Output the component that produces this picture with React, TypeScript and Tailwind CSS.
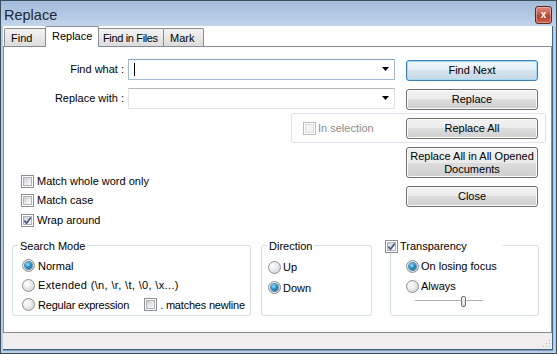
import React from "react";

const font = { fontFamily: "'Liberation Sans', Arial, sans-serif" };

function Check({ checked = false, disabled = false }: { checked?: boolean; disabled?: boolean }) {
  return (
    <span
      className={
        "relative inline-block w-[13px] h-[13px] shrink-0 border p-[1px] bg-white " +
        (disabled ? "border-[#bcbcbc]" : "border-[#8e8f8f]")
      }
    >
      <span
        className={
          "block w-full h-full border " +
          (disabled
            ? "border-[#dcdcdc] bg-[#f4f4f4]"
            : "border-[#b0b4ba] bg-[linear-gradient(135deg,#c8ccd2,#eceef0_60%,#f8f8f8)]")
        }
      />
      {checked && (
        <svg className="absolute left-0 top-0" width="11" height="11" viewBox="0 0 11 11">
          <path d="M2.3 5.6 L4.5 8.2 L8.8 2.4" fill="none" stroke="#45598a" strokeWidth="1.7" />
        </svg>
      )}
    </span>
  );
}

function Radio({ checked = false }: { checked?: boolean }) {
  return (
    <span className="relative flex items-center justify-center w-[13px] h-[13px] shrink-0 rounded-full border border-[#8e9092] bg-[radial-gradient(circle_at_35%_35%,#ffffff,#e6e7e9_50%,#c9cbce)]">
      {checked && (
        <span className="block w-[7px] h-[7px] rounded-full bg-[radial-gradient(circle_at_40%_35%,#9be6fb,#2a8fc4_45%,#0b4f79)] shadow-[0_0_0_1px_#5b8db0]" />
      )}
    </span>
  );
}

function Btn({ children, h = "h-[21px]", focus = false }: { children: React.ReactNode; h?: string; focus?: boolean }) {
  return (
    <div
      className={
        "relative z-10 w-[132px] flex items-center justify-center text-center leading-[13px] rounded-[3px] border " +
        h +
        " " +
        (focus
          ? "border-[#3c7fb1] bg-[linear-gradient(to_bottom,#eef6fb,#e4eef5_50%,#d4e2ec_50%,#c6d8e6)] shadow-[inset_0_0_0_1px_#9fd9f5]"
          : "border-[#707070] bg-[linear-gradient(to_bottom,#f2f2f2,#ebebeb_50%,#dddddd_50%,#cfcfcf)] shadow-[inset_0_0_0_1px_#fbfbfb]")
      }
    >
      {children}
    </div>
  );
}

function Combo({ focus = false, caret = false }: { focus?: boolean; caret?: boolean }) {
  return (
    <div
      className={
        "relative w-[267px] h-[21px] border bg-white flex items-center " +
        (focus ? "border-[#a3bbd2] border-t-[#7d9fbf]" : "border-[#e0e3e8] border-t-[#b4b7bd]")
      }
    >
      {caret && <span className="ml-[5px] w-px h-[13px] bg-black" />}
      <svg className="absolute right-[5px] top-[7px]" width="7" height="4" viewBox="0 0 7 4">
        <path d="M0 0 H7 L3.5 4 Z" fill="#000" />
      </svg>
    </div>
  );
}

function Group({ label, w, children, labelNode }: { label?: string; w: string; children: React.ReactNode; labelNode?: React.ReactNode }) {
  return (
    <div className={"relative h-[71px] rounded-[3px] border border-[#d5dfe5] " + w}>
      {label && (
        <span className="absolute left-[5px] top-[-6px] px-[2px] bg-white leading-[13px] whitespace-nowrap">{label}</span>
      )}
      {labelNode}
      {children}
    </div>
  );
}

const row = "flex items-center whitespace-nowrap";

export default function App() {
  return (
    <div
      className="w-[557px] h-[354px] flex flex-col border border-[#3e4e5e] bg-[#b9cde4] text-[11px] text-black overflow-hidden"
      style={font}
    >
      {/* title bar */}
      <div className="h-[25px] shrink-0 flex items-center justify-between bg-[linear-gradient(to_bottom,#a2bcd9,#b4cae3_60%,#c2d5ea)] pl-[3px] pr-[4px]">
        <span className="text-[14.5px] text-[#1e2733] leading-[16px] mt-[2px]">Replace</span>
        <span className="w-[17px] h-[18px] mt-[2px] rounded-[3px] border border-[#5b2620] bg-[linear-gradient(to_bottom,#dd8a7c,#c65a48_45%,#b2402f_55%,#c9634f)] flex items-center justify-center text-white text-[10px] font-bold leading-none shadow-[inset_0_0_0_1px_rgba(255,255,255,0.35)]">
          x
        </span>
      </div>

      {/* client */}
      <div className="flex-1 flex flex-col ml-[2px] mr-[3px] mb-[3px] bg-white border-r border-b border-[#3f627f] shadow-[0_1px_0_#7f9dbc]">
        {/* tabs */}
        <div className="h-[20px] flex items-end pl-[1px] shrink-0 whitespace-nowrap">
          <div className="w-[42px] h-[18px] border border-b-0 border-[#898c95] rounded-t-[2px] bg-[linear-gradient(to_bottom,#f4f4f4,#e8e8e8_50%,#dcdcdc)] pl-[6px] leading-[18px]">Find</div>
          <div className="relative z-20 -ml-px -mb-px w-[54px] h-[21px] border border-b-0 border-[#898c95] rounded-t-[2px] bg-white pl-[6px] leading-[18px]">Replace</div>
          <div className="-ml-px w-[66px] h-[18px] border border-b-0 border-[#898c95] rounded-t-[2px] bg-[linear-gradient(to_bottom,#f4f4f4,#e8e8e8_50%,#dcdcdc)] pl-[4px] leading-[18px] tracking-[-0.35px] overflow-hidden">Find in Files</div>
          <div className="-ml-px w-[41px] h-[18px] border border-b-0 border-[#898c95] rounded-t-[2px] bg-[linear-gradient(to_bottom,#f4f4f4,#e8e8e8_50%,#dcdcdc)] pl-[6px] leading-[18px]">Mark</div>
        </div>

        {/* panel */}
        <div className="relative h-[287px] shrink-0 border border-[#898c95] bg-white">
          {/* In selection group (behind buttons) */}
          <div className="absolute left-[287px] top-[66px] w-[255px] h-[30px] rounded-[3px] border border-[#dde3e8] flex items-center pl-[11px] gap-[2px] text-[#8d8d8d] whitespace-nowrap">
            <Check disabled />
            <span>In selection</span>
          </div>

          <div className="flex">
            {/* left column */}
            <div className="w-[391px] flex flex-col">
              <div className={"mt-[12px] " + row}>
                <span className="w-[120px] text-right">Find what :</span>
                <span className="ml-[4px]"><Combo focus caret /></span>
              </div>
              <div className={"mt-[8px] " + row}>
                <span className="w-[120px] text-right">Replace with :</span>
                <span className="ml-[4px]"><Combo /></span>
              </div>
              <div className="mt-[62px] pl-[17px] flex flex-col">
                <div className={"h-[20px] gap-[3px] " + row}><Check /><span>Match whole word only</span></div>
                <div className={"h-[19px] gap-[3px] " + row}><Check /><span>Match case</span></div>
                <div className={"h-[20px] gap-[3px] " + row}><Check checked /><span>Wrap around</span></div>
              </div>
            </div>
            {/* right column */}
            <div className="ml-[11px] mt-[13px] flex flex-col gap-[8px]">
              <Btn focus>Find Next</Btn>
              <Btn>Replace</Btn>
              <Btn>Replace All</Btn>
              <Btn h="h-[31px]">
                Replace All in All Opened
                <br />
                Documents
              </Btn>
              <Btn>Close</Btn>
            </div>
          </div>

          {/* groups */}
          <div className="mt-[15px] pl-[8px] flex">
            <Group label="Search Mode" w="w-[239px]">
              <div className="pt-[10px] pl-[9px] flex flex-col">
                <div className={"h-[19.5px] gap-[3px] " + row}><Radio checked /><span>Normal</span></div>
                <div className={"h-[19.5px] gap-[3px] " + row}><Radio /><span className="tracking-[0.35px]">Extended (\n, \r, \t, \0, \x...)</span></div>
                <div className={"h-[19.5px] gap-[3px] " + row}>
                  <Radio />
                  <span className="tracking-[-0.2px]">Regular expression</span>
                  <span className={"ml-[12px] gap-[3px] " + row}><Check /><span className="tracking-[-0.2px]">. matches newline</span></span>
                </div>
              </div>
            </Group>
            <div className="ml-[10px]">
              <Group label="Direction" w="w-[111px]">
                <div className="pt-[11px] pl-[6px] flex flex-col">
                  <div className={"h-[20.5px] gap-[2px] " + row}><Radio /><span>Up</span></div>
                  <div className={"h-[20.5px] gap-[2px] " + row}><Radio checked /><span>Down</span></div>
                </div>
              </Group>
            </div>
            <div className="ml-[18px]">
              <Group
                w="w-[149px]"
                labelNode={
                  <span className="absolute left-[-6px] top-[-7px] w-[118px] h-[14px] bg-white flex items-center gap-[2px] whitespace-nowrap">
                    <Check checked />
                    <span>Transparency</span>
                  </span>
                }
              >
                <div className="pt-[10px] pl-[15px] flex flex-col">
                  <div className={"h-[20px] gap-[2px] " + row}><Radio checked /><span>On losing focus</span></div>
                  <div className={"h-[20px] gap-[2px] " + row}><Radio /><span>Always</span></div>
                  <div className="relative ml-[9px] w-[68px] h-[10px]">
                    <span className="absolute left-0 right-0 top-[4px] h-[2px] border-t border-[#b0b0b0] border-b border-b-white bg-[#e7e7e7]" />
                    <span className="absolute left-[46px] top-0 w-[5px] h-[11px] rounded-[2px] border border-[#707070] bg-[linear-gradient(to_bottom,#f6f6f6,#dcdcdc)]" />
                  </div>
                </div>
              </Group>
            </div>
          </div>
        </div>

        {/* status strip */}
        <div className="relative flex-1 bg-[#efedee]">
          <svg className="absolute right-[1px] bottom-[1px]" width="8" height="8" viewBox="0 0 8 8">
            <g fill="#b5b5b5">
              <rect x="6" y="0" width="1" height="1" />
              <rect x="3" y="3" width="1" height="1" />
              <rect x="6" y="3" width="1" height="1" />
              <rect x="0" y="6" width="1" height="1" />
              <rect x="3" y="6" width="1" height="1" />
              <rect x="6" y="6" width="1" height="1" />
            </g>
          </svg>
        </div>
      </div>
    </div>
  );
}
